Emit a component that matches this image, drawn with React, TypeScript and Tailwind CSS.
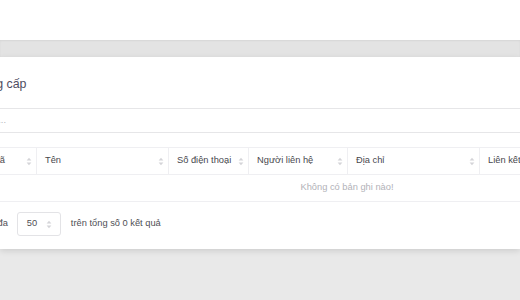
import React from "react";

const SortIcon = () => (
  <svg width="6" height="9" viewBox="0 0 6 9" className="shrink-0">
    <path d="M3 0.8 L5.4 3.6 H0.6 Z" fill="#d4d4d8" />
    <path d="M3 8.2 L5.4 5.4 H0.6 Z" fill="#d4d4d8" />
  </svg>
);

const cols: { label: string; w: number }[] = [
  { label: "STT", w: 37 },
  { label: "Mã", w: 53 },
  { label: "Tên", w: 132 },
  { label: "Số điện thoại", w: 80 },
  { label: "Người liên hệ", w: 99 },
  { label: "Địa chỉ", w: 132 },
  { label: "Liên kết", w: 232 },
];

export default function App() {
  return (
    <div
      className="w-[520px] h-[300px] overflow-hidden bg-[#e9e9e9] flex flex-col"
      style={{ fontFamily: '"Liberation Sans", Arial, sans-serif' }}
    >
      <div className="h-[40px] bg-white shrink-0" />
      <div className="h-[17px] shrink-0 bg-[#e3e3e3] shadow-[inset_0_1px_2px_rgba(0,0,0,0.06)]" />
      <div className="h-[192px] shrink-0 bg-white shadow-[0_2px_6px_rgba(0,0,0,0.12)] relative z-10 overflow-hidden">
        <div className="ml-[-53px] w-[800px] flex flex-col">
          <div className="pt-[19px] pl-[3px] h-[35px] text-[12.4px] leading-[16px] text-[#4f4d62]">
            Nhà cung cấp
          </div>
          <div className="mt-[16px] h-[25px] w-[800px] border border-[#e6e6e8] rounded-[3px] flex items-center pl-[12px] text-[9.3px] text-[#b5b5bb]">
            Tìm kiếm...
          </div>
          <div className="mt-[14px] w-[765px] border-t border-[#efeff2]">
            <div className="flex h-[27px] border-b border-[#efeff2]">
              {cols.map((c, i) => (
                <div
                  key={c.label}
                  className={`flex items-center justify-between pl-[8px] pr-[4px] text-[9.3px] text-[#48484d] ${i < cols.length - 1 ? "border-r border-[#efeff2]" : ""}`}
                  style={{ width: c.w }}
                >
                  <span className="whitespace-nowrap">{c.label}</span>
                  {i > 0 && i < cols.length - 1 && <SortIcon />}
                </div>
              ))}
            </div>
            <div className="flex h-[27px] border-b border-[#efeff2]">
              <div className="w-[36px]" />
              <div className="w-[728px] flex items-center justify-center text-[9.3px] text-[#b2b2b8]">
                Không có bản ghi nào!
              </div>
            </div>
          </div>
          <div className="mt-[10px] pl-[4px] flex items-center h-[24px] text-[9.3px] text-[#4f4f55]">
            <span className="whitespace-nowrap">Hiển thị tối đa</span>
            <div className="ml-[9px] w-[44px] h-[24px] border border-[#e3e3e6] rounded-[3px] flex items-center justify-between pl-[9px] pr-[8px]">
              <span>50</span>
              <SortIcon />
            </div>
            <span className="ml-[10px] whitespace-nowrap">trên tổng số 0 kết quả</span>
          </div>
        </div>
      </div>
      <div className="flex-1 bg-[#e9e9e9]" />
    </div>
  );
}
